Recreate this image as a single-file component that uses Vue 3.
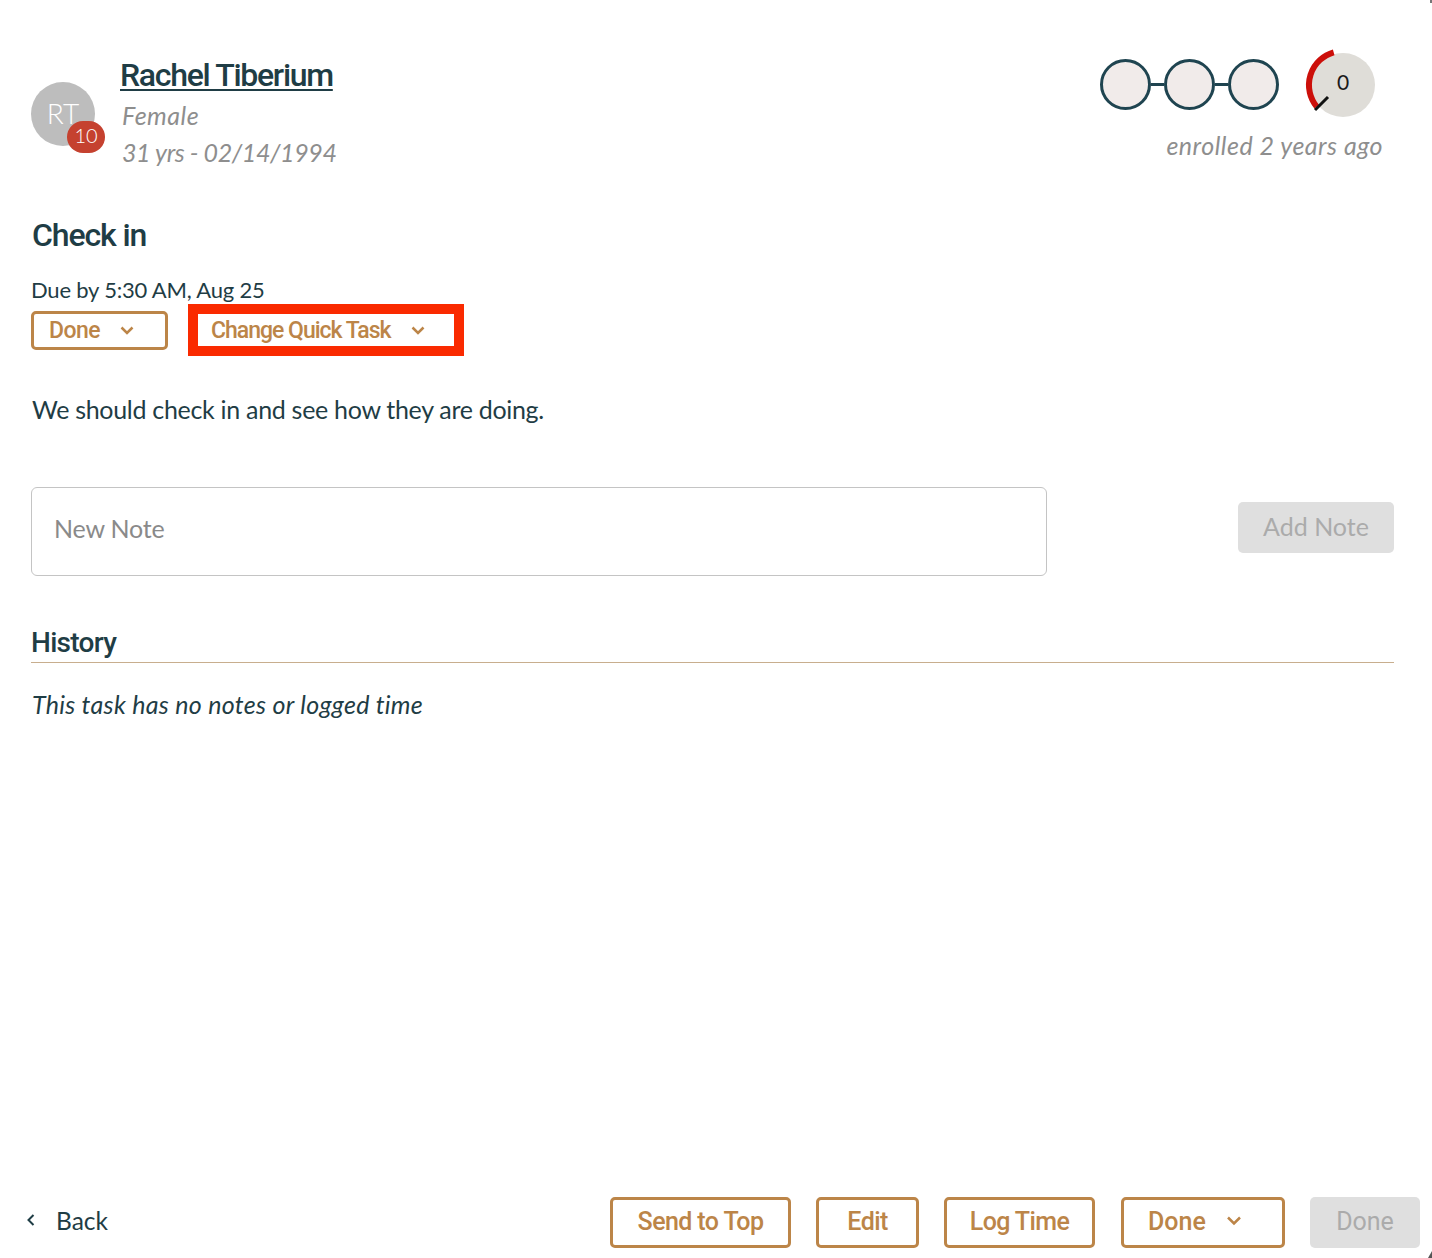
<script setup>
const dots = [0, 1, 2]
</script>

<template>
  <div class="page">
    <span class="speck"></span>
    <span class="corner"></span>
    <header class="head">
      <div class="patient">
        <div class="avatar">RT<span class="badge">10</span></div>
        <div class="who">
          <a class="name">Rachel Tiberium</a>
          <div class="meta female">Female</div>
          <div class="meta age">31 yrs - 02/14/1994</div>
        </div>
      </div>
      <div class="status">
        <div class="graphics">
          <div class="chain">
            <template v-for="d in dots" :key="d">
              <span v-if="d" class="link"></span>
              <span class="ring"></span>
            </template>
          </div>
          <div class="gauge">
            <svg width="72" height="72" viewBox="0 0 72 72">
              <circle cx="40" cy="39" r="32" fill="#dfddd8" />
              <path d="M30.7 6.3 A34 34 0 0 0 13.7 60.6" fill="none" stroke="#cc0f0a" stroke-width="6" />
              <path d="M12 64 L25 51" stroke="#111" stroke-width="3" />
            </svg>
            <span class="count">0</span>
          </div>
        </div>
        <div class="enrolled">enrolled 2 years ago</div>
      </div>
    </header>

    <h1 class="title">Check in</h1>
    <div class="due">Due by 5:30 AM, Aug 25</div>
    <div class="task-actions">
      <button class="btn small">Done
        <svg class="chev" width="14" height="9" viewBox="0 0 14 9"><path d="M1.5 1.5 L7 7 L12.5 1.5" /></svg>
      </button>
      <div class="highlight">
        <button class="change">Change Quick Task
          <svg class="chev" width="14" height="9" viewBox="0 0 14 9"><path d="M1.5 1.5 L7 7 L12.5 1.5" /></svg>
        </button>
      </div>
    </div>

    <p class="desc">We should check in and see how they are doing.</p>

    <div class="note-row">
      <div class="note">New Note</div>
      <button class="add">Add Note</button>
    </div>

    <h2 class="history">History</h2>
    <p class="empty">This task has no notes or logged time</p>

    <footer class="foot">
      <a class="back">
        <svg width="10" height="14" viewBox="0 0 10 14"><path d="M7.5 2 L2.5 7 L7.5 12" fill="none" stroke="#1f3d45" stroke-width="2" /></svg>
        Back
      </a>
      <div class="foot-actions">
        <button class="btn big top">Send to Top</button>
        <button class="btn big edit">Edit</button>
        <button class="btn big log">Log Time</button>
        <button class="btn big drop">Done
          <svg class="chev" width="16" height="10" viewBox="0 0 16 10"><path d="M2 1.5 L8 7.5 L14 1.5" /></svg>
        </button>
        <button class="final">Done</button>
      </div>
    </footer>
  </div>
</template>

<style scoped>
.page {
  width: 1432px;
  height: 1258px;
  box-sizing: border-box;
  position: relative;
  padding: 0 38px 0 31px;
  background: #fff;
  font-family: Lato, "Noto Sans", sans-serif;
  color: #1f3d45;
  overflow: hidden;
  display: flex;
  flex-direction: column;
}
.speck {
  position: absolute;
  top: 0;
  right: 0;
  width: 2px;
  height: 3px;
  background: #777;
}
.corner {
  position: absolute;
  right: 0;
  bottom: 0;
  width: 4px;
  height: 7px;
  background: #555;
  clip-path: polygon(100% 0, 100% 100%, 0 100%);
}
.head {
  display: flex;
  justify-content: space-between;
  height: 204px;
  flex: none;
}
.patient {
  display: flex;
  gap: 26px;
}
.avatar {
  position: relative;
  width: 64px;
  height: 64px;
  margin-top: 82px;
  border-radius: 50%;
  background: #bdbdbd;
  color: #fff;
  font-size: 28px;
  font-weight: 300;
  line-height: 62px;
  text-align: center;
}
.badge {
  position: absolute;
  left: 36px;
  top: 39px;
  width: 38px;
  height: 32px;
  border-radius: 16px;
  background: #c5412f;
  font-size: 20px;
  font-weight: 300;
  line-height: 29px;
}
.who {
  padding-top: 55px;
}
.name {
  display: block;
  font-family: Roboto, sans-serif;
  font-size: 32px;
  font-weight: 500;
  line-height: 41px;
  letter-spacing: -1.3px;
  text-decoration: underline;
  text-decoration-thickness: 2px;
  text-underline-offset: 3px;
  margin-left: -1px;
}
.meta {
  font-size: 25px;
  line-height: 37px;
  font-style: italic;
  color: #8e8e8e;
  margin-left: 1px;
}
.female {
  letter-spacing: 0.5px;
  margin-top: 1px;
}
.age {
  letter-spacing: -0.4px;
}
.status {
  display: flex;
  flex-direction: column;
  align-items: flex-end;
  padding-top: 46px;
}
.graphics {
  display: flex;
  align-items: flex-start;
  gap: 24px;
  margin-right: 19px;
}
.chain {
  display: flex;
  align-items: center;
  margin-top: 13px;
}
.ring {
  width: 51px;
  height: 51px;
  box-sizing: border-box;
  border: 3.5px solid #1f4450;
  border-radius: 50%;
  background: #f1ebea;
}
.link {
  width: 13px;
  height: 3px;
  background: #1f4450;
}
.gauge {
  position: relative;
  width: 72px;
  height: 72px;
}
.gauge svg {
  display: block;
}
.count {
  position: absolute;
  left: 31px;
  top: 23px;
  width: 18px;
  text-align: center;
  font-size: 21px;
  line-height: 26px;
  color: #1a1a1a;
}
.enrolled {
  font-size: 25px;
  font-style: italic;
  letter-spacing: 0.5px;
  color: #8e8e8e;
  line-height: 32px;
  margin-right: 11px;
  margin-top: 11px;
}
.title {
  margin: 10px 0 0 1px;
  font-family: Roboto, sans-serif;
  font-size: 32px;
  font-weight: 500;
  line-height: 42px;
  letter-spacing: -1.1px;
}
.due {
  margin-top: 19px;
  font-size: 22px;
  letter-spacing: -0.2px;
  line-height: 30px;
}
.task-actions {
  display: flex;
  align-items: flex-start;
  gap: 20px;
}
.btn {
  background: #fff;
  border: 3px solid #bc8548;
  border-radius: 5px;
  color: #bc8548;
  font-family: Roboto, sans-serif;
  font-weight: 500;
  display: inline-flex;
  align-items: center;
  box-sizing: border-box;
  padding: 0;
}
.chev {
  fill: none;
  stroke: #bc8548;
  stroke-width: 2.5;
  flex: none;
}
.small {
  width: 137px;
  height: 39px;
  margin-top: 6px;
  padding-left: 15px;
  font-size: 23px;
  letter-spacing: -0.5px;
  gap: 20px;
}
.highlight {
  width: 276px;
  height: 52px;
  box-sizing: border-box;
  border: 10px solid #fa2a00;
  margin-top: -1px;
}
.change {
  background: none;
  border: 0;
  padding: 0 0 0 13px;
  height: 32px;
  width: 100%;
  display: flex;
  align-items: center;
  gap: 20px;
  color: #bc8548;
  font-family: Roboto, sans-serif;
  font-size: 23px;
  font-weight: 500;
  letter-spacing: -1px;
}
.desc {
  margin: 35px 0 0 1px;
  font-size: 25px;
  letter-spacing: -0.3px;
  line-height: 36px;
}
.note-row {
  display: flex;
  justify-content: space-between;
  align-items: flex-start;
  margin-top: 60px;
}
.note {
  width: 1016px;
  height: 89px;
  box-sizing: border-box;
  border: 1px solid #c4c4c4;
  border-radius: 6px;
  padding: 23px 22px;
  font-size: 25px;
  letter-spacing: -0.2px;
  line-height: 34px;
  color: #8a8a8a;
}
.add {
  width: 156px;
  height: 51px;
  margin-top: 15px;
  background: #dfdfdf;
  border: 0;
  border-radius: 5px;
  color: #ababab;
  font-family: Lato, sans-serif;
  font-size: 25px;
  padding: 0 0 4px;
}
.history {
  margin: 49px 0 0;
  height: 37px;
  border-bottom: 1px solid #c8ae8e;
  font-family: Roboto, sans-serif;
  font-size: 28px;
  font-weight: 500;
  line-height: 36px;
  letter-spacing: -0.7px;
}
.empty {
  margin: 24px 0 0 1px;
  font-size: 25px;
  line-height: 34px;
  letter-spacing: 0.3px;
  font-style: italic;
}
.foot {
  margin-top: auto;
  margin-right: -26px;
  margin-bottom: 10px;
  display: flex;
  justify-content: space-between;
  align-items: center;
  margin-left: -5px;
}
.back {
  display: flex;
  align-items: center;
  gap: 20px;
  font-size: 24.5px;
  padding-bottom: 5px;
}
.foot-actions {
  display: flex;
  gap: 25px;
}
.big {
  height: 51px;
  font-size: 25px;
  letter-spacing: -0.6px;
  justify-content: center;
  padding-bottom: 3px;
}
.top { width: 181px; }
.edit { width: 103px; }
.log { width: 151px; }
.drop {
  width: 164px;
  margin-left: 1px;
  gap: 20px;
  justify-content: flex-start;
  padding-left: 24px;
  letter-spacing: 0;
}
.final {
  width: 110px;
  height: 51px;
  background: #dfdfdf;
  border: 0;
  border-radius: 5px;
  color: #ababab;
  font-family: Roboto, sans-serif;
  font-size: 25px;
  padding: 0 0 3px;
}
</style>
